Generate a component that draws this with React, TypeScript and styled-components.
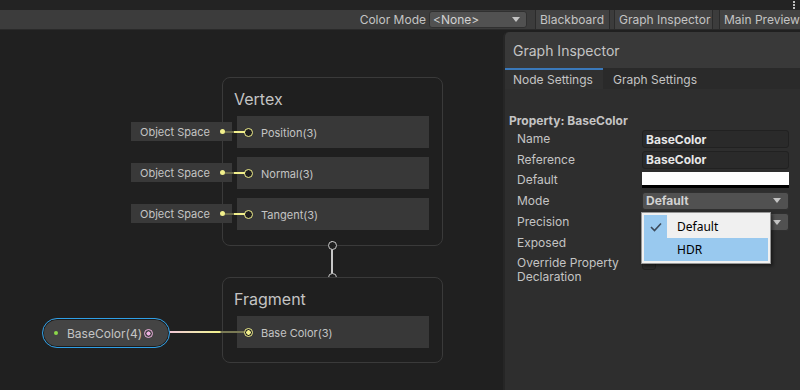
import styled, { createGlobalStyle } from "styled-components";

const GlobalStyle = createGlobalStyle`
  html, body {
    margin: 0;
    padding: 0;
    background: #202020;
    font-family: Inter, "Noto Sans", "Liberation Sans", sans-serif;
  }
  * { box-sizing: border-box; }
`;

const YELLOW = "#f2f08c";

const vertexSlots = ["Position(3)", "Normal(3)", "Tangent(3)"];

export default function App() {
  return (
    <S.Window>
      <GlobalStyle />
      <S.TitleStrip>
        <S.Kebab>
          <i />
          <i />
          <i />
        </S.Kebab>
      </S.TitleStrip>

      <S.Toolbar>
        <S.ToolLabel>Color Mode</S.ToolLabel>
        <S.ToolSelect>
          <span>&lt;None&gt;</span>
          <S.Arrow />
        </S.ToolSelect>
        <S.ToolButton $w={75} $gap={8}>
          Blackboard
        </S.ToolButton>
        <S.ToolButton $w={99} $gap={4}>
          Graph Inspector
        </S.ToolButton>
        <S.ToolButton $w={81} $gap={6} $last>
          Main Preview
        </S.ToolButton>
      </S.Toolbar>

      <S.Canvas>
        {vertexSlots.map((_, i) => (
          <S.InputChip key={i} $top={92 + i * 41}>
            <span>Object Space</span>
            <S.ChipDot />
            <S.ChipWire />
          </S.InputChip>
        ))}

        <S.Node $top={47} $height={169}>
          <S.NodeTitle>Vertex</S.NodeTitle>
          <S.Slots>
            {vertexSlots.map((s) => (
              <S.Slot key={s}>
                <S.Port />
                <span>{s}</span>
              </S.Slot>
            ))}
          </S.Slots>
        </S.Node>

        <S.Link>
          <S.LinkCap />
          <S.LinkCap />
        </S.Link>

        <S.Node $top={247} $height={86}>
          <S.NodeTitle>Fragment</S.NodeTitle>
          <S.Slots>
            <S.Slot>
              <S.Port $filled />
              <span>Base Color(3)</span>
            </S.Slot>
          </S.Slots>
        </S.Node>

        <S.Edge />

        <S.PropertyPill>
          <S.GreenDot />
          <span>BaseColor(4)</span>
          <S.PinkPort />
        </S.PropertyPill>

        <S.Inspector>
          <S.InspectorHeader>Graph Inspector</S.InspectorHeader>
          <S.Tabs>
            <S.Tab $active>Node Settings</S.Tab>
            <S.Tab>Graph Settings</S.Tab>
          </S.Tabs>
          <S.InspectorBody>
            <S.SectionTitle>Property: BaseColor</S.SectionTitle>
            <S.Row>
              <S.Label>Name</S.Label>
              <S.TextField>BaseColor</S.TextField>
            </S.Row>
            <S.Row>
              <S.Label>Reference</S.Label>
              <S.TextField>BaseColor</S.TextField>
            </S.Row>
            <S.Row>
              <S.Label>Default</S.Label>
              <S.Swatch />
            </S.Row>
            <S.Row>
              <S.Label>Mode</S.Label>
              <S.Dropdown>
                <span>Default</span>
                <S.Arrow />
              </S.Dropdown>
            </S.Row>
            <S.Row $tall>
              <S.Label>Precision</S.Label>
              <S.Dropdown>
                <span />
                <S.Arrow />
              </S.Dropdown>
            </S.Row>
            <S.Row>
              <S.Label>Exposed</S.Label>
              <S.Checkbox />
            </S.Row>
            <S.Row $multi>
              <S.Label>
                Override Property
                <br />
                Declaration
              </S.Label>
              <S.Checkbox />
            </S.Row>

            <S.Popup>
              <S.PopupItem>
                <S.CheckCell $on>
                  <svg width="12" height="10" viewBox="0 0 12 10">
                    <path d="M1 5 L4.5 8.5 L11 1.5" fill="none" stroke="#3c4a5a" strokeWidth="1.6" />
                  </svg>
                </S.CheckCell>
                <span>Default</span>
              </S.PopupItem>
              <S.PopupItem $hover>
                <S.CheckCell />
                <span>HDR</span>
              </S.PopupItem>
            </S.Popup>
          </S.InspectorBody>
        </S.Inspector>
      </S.Canvas>
    </S.Window>
  );
}

const S = {
  Window: styled.div`
    width: 800px;
    height: 390px;
    overflow: hidden;
    display: flex;
    flex-direction: column;
    background: #202020;
  `,

  TitleStrip: styled.div`
    height: 10px;
    background: #232323;
    display: flex;
    justify-content: flex-end;
  `,

  Kebab: styled.div`
    width: 12px;
    display: flex;
    flex-direction: column;
    align-items: center;
    gap: 1px;
    padding-top: 1px;
    i {
      width: 2px;
      height: 2px;
      background: #bdbdbd;
    }
  `,

  Toolbar: styled.div`
    height: 20px;
    background: #3c3c3c;
    display: flex;
    justify-content: flex-end;
    align-items: center;
    border-bottom: 1px solid #2a2a2a;
    overflow: hidden;
  `,

  ToolLabel: styled.span`
    font-size: 12px;
    color: #c4c4c4;
    margin-right: 3px;
    white-space: nowrap;
  `,

  ToolSelect: styled.div`
    width: 98px;
    flex-shrink: 0;
    height: 17px;
    background: #515151;
    border: 1px solid #303030;
    border-radius: 3px;
    padding: 0 6px 0 3px;
    display: flex;
    align-items: center;
    justify-content: space-between;
    font-size: 12px;
    color: #d2d2d2;
  `,

  Arrow: styled.i`
    width: 0;
    height: 0;
    border-left: 4px solid transparent;
    border-right: 4px solid transparent;
    border-top: 5px solid #c4c4c4;
  `,

  ToolButton: styled.div<{ $w: number; $gap: number; $last?: boolean }>`
    width: ${(p) => p.$w}px;
    margin-left: ${(p) => p.$gap}px;
    flex-shrink: 0;
    height: 19px;
    padding-left: 4px;
    display: flex;
    align-items: center;
    white-space: nowrap;
    overflow: hidden;
    font-size: 12px;
    color: #c4c4c4;
    background: #424242;
    border-left: 1px solid #2b2b2b;
    border-right: ${(p) => (p.$last ? "none" : "1px solid #2b2b2b")};
  `,

  Canvas: styled.div`
    position: relative;
    flex: 1;
    background: #202020;
  `,

  InputChip: styled.div<{ $top: number }>`
    position: absolute;
    left: 131px;
    top: ${(p) => p.$top}px;
    width: 101px;
    height: 19px;
    background: #393939;
    display: flex;
    align-items: center;
    padding-left: 9px;
    font-size: 11px;
    color: #c4c4c4;
    z-index: 2;
  `,

  ChipDot: styled.i`
    position: absolute;
    left: 89px;
    top: 7px;
    width: 5px;
    height: 5px;
    border-radius: 50%;
    background: ${YELLOW};
  `,

  ChipWire: styled.i`
    position: absolute;
    left: 94px;
    top: 9px;
    width: 20px;
    height: 2px;
    background: linear-gradient(90deg, #6a6a4c 0 9px, ${YELLOW} 9px);
  `,

  Node: styled.div<{ $top: number; $height: number }>`
    position: absolute;
    left: 222px;
    top: ${(p) => p.$top}px;
    width: 221px;
    height: ${(p) => p.$height}px;
    background: #1f1f1f;
    border: 1px solid #3a3a3a;
    border-radius: 8px;
    padding: 0 13px 0 14px;
  `,

  NodeTitle: styled.div`
    height: 38px;
    padding-top: 10px;
    margin-left: -3px;
    line-height: 22px;
    font-size: 16px;
    color: #c4c4c4;
  `,

  Slots: styled.div`
    display: flex;
    flex-direction: column;
    gap: 9px;
  `,

  Slot: styled.div`
    height: 32px;
    background: #383838;
    display: flex;
    align-items: center;
    gap: 8px;
    padding-left: 7px;
    font-size: 11px;
    color: #c4c4c4;
    span {
      margin-top: 2px;
    }
  `,

  Port: styled.i<{ $filled?: boolean }>`
    width: 9px;
    height: 9px;
    border-radius: 50%;
    border: 1.5px solid ${YELLOW};
    background: ${(p) =>
      p.$filled ? `radial-gradient(circle, ${YELLOW} 0 2px, #1f1f1f 2.5px)` : "#1f1f1f"};
  `,

  Link: styled.div`
    position: absolute;
    left: 328px;
    top: 211px;
    width: 9px;
    height: 41px;
    display: flex;
    flex-direction: column;
    justify-content: space-between;
    align-items: center;
    background: linear-gradient(90deg, transparent 3px, #c8c8c8 3px 5px, transparent 5px);
  `,

  LinkCap: styled.i`
    width: 9px;
    height: 9px;
    border-radius: 50%;
    border: 1.5px solid #c8c8c8;
    background: #1f1f1f;
  `,

  Edge: styled.div`
    position: absolute;
    left: 169px;
    top: 301px;
    width: 75px;
    height: 2px;
    background: linear-gradient(
      90deg,
      #f2c6d8 0,
      #f0e6b0 30px,
      ${YELLOW} 50px,
      ${YELLOW} 51px,
      #7a7a55 52px
    );
  `,

  PropertyPill: styled.div`
    position: absolute;
    left: 42px;
    top: 288px;
    width: 128px;
    height: 30px;
    border-radius: 15px;
    background: #444444;
    border: 1.5px solid #2f9fe6;
    box-shadow: inset 0 0 0 1px #1c1c1c;
    display: flex;
    align-items: center;
    padding-left: 11px;
    font-size: 12px;
    color: #c4c4c4;
    span {
      margin-left: 9px;
      flex: 1;
    }
  `,

  GreenDot: styled.i`
    width: 4px;
    height: 4px;
    border-radius: 50%;
    background: #8cd84a;
  `,

  PinkPort: styled.i`
    width: 9px;
    height: 9px;
    margin-right: 16px;
    border-radius: 50%;
    border: 1.5px solid #efb1e0;
    background: radial-gradient(circle, #efb1e0 0 1.8px, #444 2.3px);
  `,

  Inspector: styled.div`
    position: absolute;
    left: 503px;
    top: 2px;
    width: 297px;
    bottom: 0;
    background: #2e2e2e;
    border-left: 2px solid #262626;
    border-top-left-radius: 5px;
    display: flex;
    flex-direction: column;
  `,

  InspectorHeader: styled.div`
    height: 36px;
    background: #393939;
    border-top-left-radius: 5px;
    padding: 10px 0 0 8px;
    font-size: 14px;
    color: #c4c4c4;
  `,

  Tabs: styled.div`
    height: 21px;
    display: flex;
    background: #2a2a2a;
  `,

  Tab: styled.div<{ $active?: boolean }>`
    padding: 0 10px 0 ${(p) => (p.$active ? "8px" : "10px")};
    width: ${(p) => (p.$active ? "98px" : "auto")};
    display: flex;
    align-items: center;
    font-size: 12px;
    color: #c4c4c4;
    background: ${(p) => (p.$active ? "#303030" : "transparent")};
    border-top: 2px solid ${(p) => (p.$active ? "#3a79bb" : "transparent")};
  `,

  InspectorBody: styled.div`
    position: relative;
    flex: 1;
    padding: 24px 11px 0 4px;
  `,

  SectionTitle: styled.div`
    font-size: 12px;
    font-weight: 700;
    color: #c4c4c4;
    margin-bottom: 1px;
  `,

  Row: styled.div<{ $tall?: boolean; $multi?: boolean }>`
    display: grid;
    grid-template-columns: 133px 147px;
    align-items: ${(p) => (p.$multi ? "start" : "center")};
    height: ${(p) => (p.$multi ? "32px" : p.$tall ? "22px" : "20.5px")};
    padding-top: ${(p) => (p.$multi ? "2px" : "0")};
  `,

  Label: styled.div`
    padding-left: 8px;
    font-size: 12px;
    line-height: 14px;
    color: #c4c4c4;
  `,

  TextField: styled.div`
    height: 18px;
    background: #2a2a2a;
    border: 1px solid #212121;
    border-radius: 3px;
    padding: 0 3px;
    display: flex;
    align-items: center;
    font-size: 12px;
    font-weight: 700;
    color: #e6e6e6;
  `,

  Swatch: styled.div`
    height: 16px;
    background: #ffffff;
    border-bottom: 3px solid #000000;
  `,

  Dropdown: styled.div`
    height: 18px;
    background: #515151;
    border: 1px solid #303030;
    border-radius: 3px;
    padding: 0 7px 0 3px;
    display: flex;
    align-items: center;
    justify-content: space-between;
    font-size: 12px;
    font-weight: 700;
    color: #d2d2d2;
  `,

  Checkbox: styled.div`
    width: 14px;
    height: 14px;
    background: #2a2a2a;
    border: 1px solid #212121;
    border-radius: 3px;
  `,

  Popup: styled.div`
    position: absolute;
    left: 136px;
    top: 123px;
    width: 130px;
    padding: 2px;
    background: #f0f0f0;
    border: 1px solid #979797;
    box-shadow: 2px 2px 3px rgba(0, 0, 0, 0.45);
  `,

  PopupItem: styled.div<{ $hover?: boolean }>`
    height: 23px;
    display: flex;
    align-items: center;
    font-family: "Noto Sans", "Liberation Sans", sans-serif;
    font-size: 12px;
    color: #000000;
    background: ${(p) => (p.$hover ? "#99c9ef" : "transparent")};
    span {
      margin-left: 10px;
    }
  `,

  CheckCell: styled.div<{ $on?: boolean }>`
    width: 23px;
    height: 23px;
    display: flex;
    align-items: center;
    justify-content: center;
    background: ${(p) => (p.$on ? "#99c9ef" : "transparent")};
  `,
};
